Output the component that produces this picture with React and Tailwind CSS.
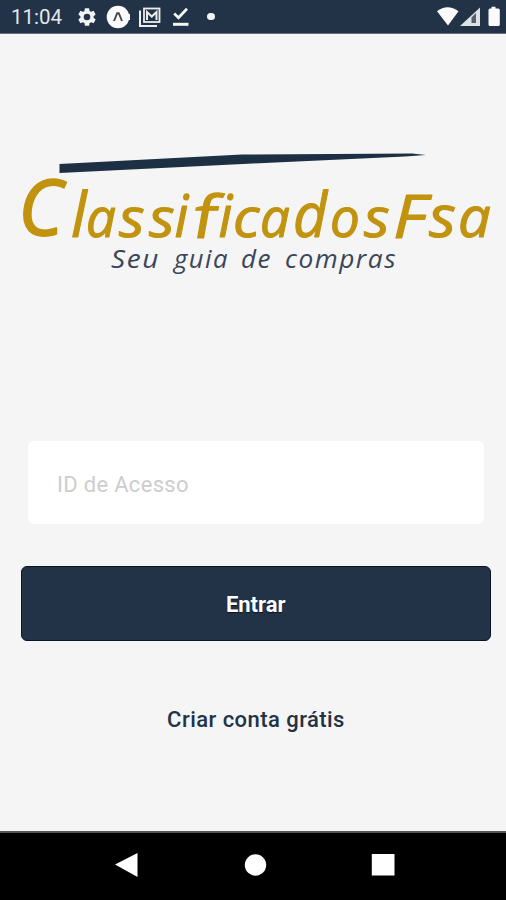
import React from 'react';

const GOLD = '#c1930e';

// Each letter of the wordmark: character, left edge, baseline, font size,
// horizontal stretch, slant in degrees (upright letters only) and outline width
const WORDMARK = [
  { ch: 'C', x: 18.5, y: 234.5, size: 77, sx: 0.98, pen: 2 },
  { ch: 'l', x: 71, y: 237, size: 62, sx: 1 },
  { ch: 'a', x: 86, y: 236.5, size: 54, sx: 0.98 },
  { ch: 's', x: 119, y: 236.5, size: 54, sx: 1.1 },
  { ch: 's', x: 149, y: 236.5, size: 54, sx: 1.1 },
  { ch: 'i', x: 174.5, y: 237, size: 58, sx: 0.95 },
  { ch: 'f', x: 190, y: 238, size: 59, sx: 1.2, slant: 10 },
  { ch: 'i', x: 218.5, y: 237, size: 58, sx: 0.95 },
  { ch: 'c', x: 233, y: 236.5, size: 54, sx: 1.08 },
  { ch: 'a', x: 260, y: 236.5, size: 54, sx: 0.98 },
  { ch: 'd', x: 293, y: 236.5, size: 63, sx: 0.94 },
  { ch: 'o', x: 330, y: 236.5, size: 54, sx: 0.98 },
  { ch: 's', x: 364, y: 236.5, size: 54, sx: 1.1 },
  { ch: 'F', x: 393, y: 237.5, size: 61, sx: 1.15 },
  { ch: 's', x: 429, y: 236.5, size: 58, sx: 1.08 },
  { ch: 'a', x: 458, y: 236.5, size: 57, sx: 1.02 },
];

function Logo() {
  return (
    <svg className="block w-full h-[150px] shrink-0" viewBox="0 140 506 150" role="img" aria-label="ClassificadosFsa">
      <path d="M59.5 164 L242 154.5 L412 153.6 L426 155 L405 156.5 L253 163.5 L59.5 173 Z" fill="#1d2f42" />
      <g fontFamily="'Open Sans', 'Noto Sans', sans-serif" fill={GOLD} stroke={GOLD} strokeLinejoin="round">
        {WORDMARK.map(({ ch, x, y, size, sx, slant, pen }, i) => (
          <text
            key={i}
            fontSize={size}
            fontStyle={slant ? 'normal' : 'italic'}
            strokeWidth={pen || 1.1}
            transform={`translate(${x} ${y}) skewX(${-(slant || 0)}) scale(${sx} 1)`}
          >
            {ch}
          </text>
        ))}
      </g>
      <g fontFamily="'Open Sans', 'Noto Sans', sans-serif" fontStyle="italic" fontSize="26" letterSpacing="1.5" fill="#3a4658">
        <text x="111" y="268" textLength="49" lengthAdjust="spacingAndGlyphs">Seu</text>
        <text x="174" y="268" textLength="55" lengthAdjust="spacingAndGlyphs">guia</text>
        <text x="241" y="268" textLength="31" lengthAdjust="spacingAndGlyphs">de</text>
        <text x="285" y="268" textLength="112" lengthAdjust="spacingAndGlyphs">compras</text>
      </g>
    </svg>
  );
}

function StatusBar() {
  return (
    <header className="flex h-[34px] shrink-0 items-center bg-[#223247] border-b border-[#65707d] pl-[11px] text-[#e4e7ea]">
      <span className="w-[51px] whitespace-nowrap pt-[2px] text-[20.5px] leading-none">11:04</span>
      <svg className="ml-[14px] h-[22px] w-[22px]" viewBox="0 0 24 24" fill="#f3f4f5">
        <path d="M19.14 12.94c.04-.3.06-.61.06-.94s-.02-.64-.07-.94l2.03-1.58a.5.5 0 0 0 .12-.61l-1.92-3.32a.49.49 0 0 0-.59-.22l-2.39.96a7 7 0 0 0-1.62-.94l-.36-2.54a.48.48 0 0 0-.48-.41h-3.84a.48.48 0 0 0-.47.41l-.36 2.54c-.59.24-1.13.57-1.62.94l-2.39-.96a.48.48 0 0 0-.59.22L2.74 8.87a.48.48 0 0 0 .12.61l2.03 1.58a7 7 0 0 0 0 1.88l-2.03 1.58a.5.5 0 0 0-.12.61l1.92 3.32c.12.22.37.29.59.22l2.39-.96c.5.38 1.03.7 1.62.94l.36 2.54c.05.24.24.41.48.41h3.84c.24 0 .44-.17.47-.41l.36-2.54a7 7 0 0 0 1.62-.94l2.39.96c.22.08.47 0 .59-.22l1.92-3.32a.48.48 0 0 0-.12-.61zM12 15.6a3.6 3.6 0 1 1 0-7.2 3.6 3.6 0 0 1 0 7.2z" />
      </svg>
      <svg className="ml-[8px] h-[24px] w-[25px]" viewBox="0 0 25 24">
        <circle cx="12" cy="12" r="11.3" fill="#fafafa" />
        <path d="M21 9h3v6h-3z" fill="#fafafa" />
        <path d="M8 16 L11.2 8.2 H12.8 L16 16" fill="none" stroke="#3e4854" strokeWidth="1.9" />
      </svg>
      <svg className="ml-[7px] h-[22px] w-[23px]" viewBox="0 0 23 22" fill="none" stroke="#eceeef" strokeWidth="2">
        <path d="M2 4.5V20H19" />
        <rect x="6" y="2.5" width="15.5" height="13.5" strokeWidth="1.8" />
        <path d="M9 14V6l4.75 4.5L18.5 6v8" strokeWidth="2" />
      </svg>
      <svg className="ml-[11px] h-[20px] w-[18px]" viewBox="0 0 18 20" fill="none" stroke="#f4f5f5">
        <path d="M2.2 6.5 L6.5 10.7 L15 1.7" strokeWidth="2.7" />
        <path d="M1 17.3H16.5" strokeWidth="3" />
      </svg>
      <span className="ml-[17px] h-[7px] w-[8px] rounded-full bg-[#f1f2f3]" />
      <svg className="ml-auto h-[34px] w-[70px]" viewBox="0 0 70 34" fill="#fafafa">
        <path d="M1 11.2Q11.5 3.5 22.5 11.2L12 25.4Z" />
        <path d="M24 26L44 7.5V26Z" fill="#dfe2e4" />
        <path d="M35.5 17.5L40 13V23H35.5Z" fill="#536070" />
        <path d="M55.5 7h4M53.5 8.5h2V6.8h4v1.7h2.8q1.5 0 1.5 1.5v14.5q0 1.5-1.5 1.5h-8.3q-1.5 0-1.5-1.5V10q0-1.5 1.5-1.5z" />
      </svg>
    </header>
  );
}

function NavigationBar() {
  return (
    <nav className="flex h-[69px] shrink-0 border-t-2 border-[#555] bg-black">
      <svg className="block h-[67px] w-full" viewBox="0 833 506 67" fill="white">
        <path d="M115 864.5L137.5 853V877Z" />
        <circle cx="255.5" cy="865" r="10.7" />
        <rect x="371.8" y="854" width="22.7" height="21.5" />
      </svg>
    </nav>
  );
}

export default function App() {
  return (
    <div className="flex h-[900px] w-[506px] flex-col overflow-hidden bg-[#f5f5f5] font-['Roboto',sans-serif]">
      <StatusBar />
      <main className="flex flex-1 flex-col pt-[106px]">
        <Logo />
        <input
          type="text"
          aria-label="ID de Acesso"
          placeholder="ID de Acesso"
          className="ml-[28px] mt-[151px] h-[83px] w-[456px] shrink-0 rounded-[6px] bg-white pl-[29px] pt-[3px] text-[22px] tracking-[0.3px] outline-none placeholder:text-[#cdcdcd]"
        />
        <button className="ml-[21px] mt-[42px] h-[74.5px] w-[469.5px] shrink-0 rounded-[6px] border-[1.5px] border-[#071526] bg-[#223247] pt-[2px] text-[22px] font-bold text-white [text-shadow:0_1px_1px_#071526]">
          Entrar
        </button>
        <button className="mx-auto mt-[63px] h-8 whitespace-nowrap pl-[6px] text-[22px] font-medium leading-8 tracking-[0.45px] text-[#223247]">
          Criar conta grátis
        </button>
      </main>
      <NavigationBar />
    </div>
  );
}
